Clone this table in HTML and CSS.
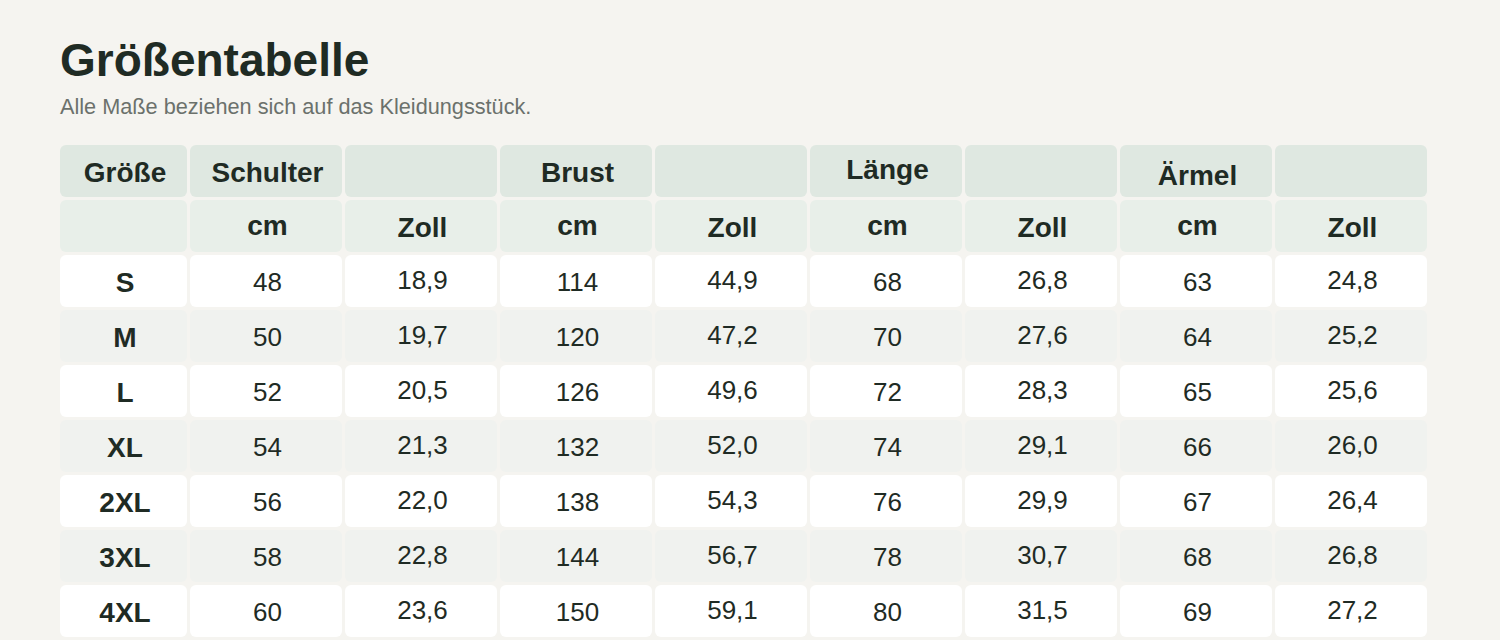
FILE: index.html
```html
<!DOCTYPE html>
<html lang="de">
<head>
<meta charset="utf-8">
<title>Größentabelle</title>
<link rel="stylesheet" href="styles.css">
</head>
<body>
<main class="page">
  <h1 class="title">Größentabelle</h1>
  <p class="subtitle">Alle Maße beziehen sich auf das Kleidungsstück.</p>
  <table class="sizes">
    <colgroup>
      <col class="c-size">
      <col class="c-val"><col class="c-val"><col class="c-val"><col class="c-val">
      <col class="c-val"><col class="c-val"><col class="c-val"><col class="c-val">
    </colgroup>
    <thead>
      <tr class="h1">
        <th>Größe</th>
        <th>Schulter</th><th></th>
        <th>Brust</th><th></th>
        <th class="up">Länge</th><th></th>
        <th class="dn">Ärmel</th><th></th>
      </tr>
      <tr class="h2">
        <th></th>
        <th>cm</th><th class="in">Zoll</th>
        <th>cm</th><th class="in">Zoll</th>
        <th>cm</th><th class="in">Zoll</th>
        <th>cm</th><th class="in">Zoll</th>
      </tr>
    </thead>
    <tbody>
      <tr><th>S</th><td>48</td><td class="in">18,9</td><td>114</td><td class="in">44,9</td><td>68</td><td class="in">26,8</td><td>63</td><td class="in">24,8</td></tr>
      <tr><th>M</th><td>50</td><td class="in">19,7</td><td>120</td><td class="in">47,2</td><td>70</td><td class="in">27,6</td><td>64</td><td class="in">25,2</td></tr>
      <tr><th>L</th><td>52</td><td class="in">20,5</td><td>126</td><td class="in">49,6</td><td>72</td><td class="in">28,3</td><td>65</td><td class="in">25,6</td></tr>
      <tr><th>XL</th><td>54</td><td class="in">21,3</td><td>132</td><td class="in">52,0</td><td>74</td><td class="in">29,1</td><td>66</td><td class="in">26,0</td></tr>
      <tr><th>2XL</th><td>56</td><td class="in">22,0</td><td>138</td><td class="in">54,3</td><td>76</td><td class="in">29,9</td><td>67</td><td class="in">26,4</td></tr>
      <tr><th>3XL</th><td>58</td><td class="in">22,8</td><td>144</td><td class="in">56,7</td><td>78</td><td class="in">30,7</td><td>68</td><td class="in">26,8</td></tr>
      <tr><th>4XL</th><td>60</td><td class="in">23,6</td><td>150</td><td class="in">59,1</td><td>80</td><td class="in">31,5</td><td>69</td><td class="in">27,2</td></tr>
    </tbody>
  </table>
</main>
</body>
</html>
```
FILE: styles.css
```css
html, body {
  margin: 0;
  padding: 0;
  background: #f5f4f0;
}
body {
  font-family: "Liberation Sans", Arial, sans-serif;
  color: #1f2b24;
}
.page {
  padding: 34px 57px 0 57px;
}
.title {
  margin: 0 0 0 3px;
  font-size: 46px;
  font-weight: 700;
  line-height: 52px;
  color: #1f2b24;
}
.subtitle {
  margin: 9px 0 0 3px;
  font-size: 21.7px;
  line-height: 24px;
  color: #6b716c;
}
.sizes {
  margin-top: 23px;
  border-collapse: separate;
  border-spacing: 3px;
  table-layout: fixed;
}
.c-size { width: 127px; }
.c-val { width: 152px; }
.sizes tr {
  height: 52px;
}
.sizes th,
.sizes td {
  padding: 0 0 0 3px;
  border-radius: 6px;
  text-align: center;
  vertical-align: top;
  line-height: 28px;
  white-space: nowrap;
}
.sizes th {
  font-size: 28px;
  font-weight: 700;
  padding-top: 14px;
}
.sizes td {
  font-size: 26px;
  font-weight: 400;
  padding-top: 13px;
}
.sizes td.in {
  padding-top: 10.7px;
}
.h1 th {
  background: #dfe8e1;
  padding-top: 13.8px;
}
.h1 th.up {
  padding-top: 10.5px;
}
.h1 th.dn {
  padding-top: 17px;
}
.h2 th {
  background: #e8efe9;
  padding-top: 12px;
}
.h2 th.in {
  padding-top: 13.8px;
}
.sizes tbody tr:nth-child(odd) th,
.sizes tbody tr:nth-child(odd) td {
  background: #ffffff;
}
.sizes tbody tr:nth-child(even) th,
.sizes tbody tr:nth-child(even) td {
  background: #f0f2ef;
}
```
